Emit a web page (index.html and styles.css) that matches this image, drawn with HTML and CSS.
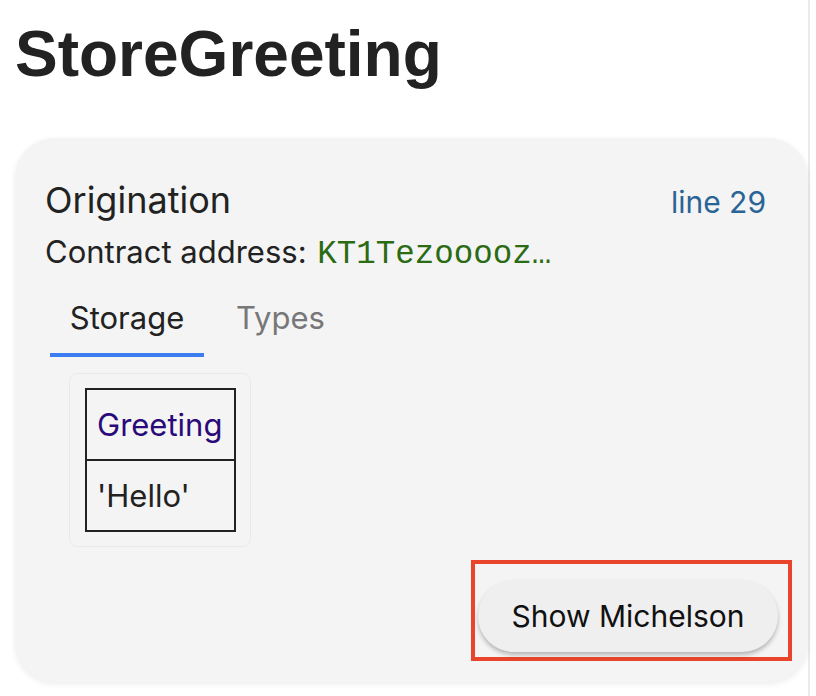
FILE: index.html
```html
<!DOCTYPE html>
<html>
<head>
<meta charset="utf-8">
<link rel="stylesheet" href="styles.css">
</head>
<body>
<div class="page">
  <h1 class="title">StoreGreeting</h1>
  <div class="card">
    <div class="card-head">
      <span class="heading">Origination</span>
      <a class="line-link">line 29</a>
    </div>
    <div class="address">Contract address: <span class="addr">KT1Tezooooz…</span></div>
    <div class="tabs">
      <div class="tab active">Storage</div>
      <div class="tab">Types</div>
    </div>
    <div class="storage">
      <table class="table">
        <tr><th>Greeting</th></tr>
        <tr><td>'Hello'</td></tr>
      </table>
    </div>
    <div class="actions">
      <div class="highlight">
        <button class="btn">Show Michelson</button>
      </div>
    </div>
  </div>
</div>
</body>
</html>
```

FILE: styles.css
```css
* { box-sizing: border-box; }
html, body { margin: 0; padding: 0; background: #fff; }
body { font-family: Inter, "Noto Sans", sans-serif; color: #222; }
.page {
  width: 810px;
  min-height: 696px;
  border-right: 2px solid #ebebeb;
  padding: 14px 0 0 15px;
}
.title {
  margin: 0;
  font-family: "Liberation Sans", Arial, sans-serif;
  font-weight: 700;
  font-size: 64px;
  line-height: 80px;
  color: #222;
}
.card {
  margin-top: 44px;
  width: 793px;
  height: 544px;
  background: #f4f4f4;
  border-radius: 40px;
  box-shadow: 0 2px 6px rgba(0,0,0,0.08);
  padding: 37px 42px 0 30px;
  display: flex;
  flex-direction: column;
}
.card-head {
  display: flex;
  justify-content: space-between;
  align-items: baseline;
}
.heading { font-size: 36px; line-height: 50px; color: #222; }
.line-link { font-size: 30px; color: #2a6496; }
.address { font-size: 31px; line-height: 44px; margin-top: 5px; }
.addr {
  font-family: "Liberation Mono", "DejaVu Sans Mono", monospace;
  font-size: 32.5px;
  color: #2b6b13;
  margin-left: 2px;
}
.tabs {
  display: flex;
  margin-top: 21px;
  margin-left: 5px;
}
.tab {
  font-size: 31px;
  line-height: 40px;
  padding: 0 0 15px 0;
  color: #777;
  border-bottom: 4px solid transparent;
}
.tab.active { color: #222; border-bottom-color: #3b7cf0; width: 154px; text-align: center; }
.tab:not(.active) { padding-left: 32px; }
.storage {
  margin-top: 16px;
  margin-left: 24px;
  align-self: flex-start;
  padding: 14px 14px 14px 15px;
  border: 1px solid #e9e9e9;
  border-radius: 8px;
}
.table {
  border-collapse: collapse;
  border: 2px solid #222;
}
.table th, .table td {
  border: 2px solid #222;
  text-align: left;
  font-weight: 400;
  font-size: 31px;
  line-height: 36px;
  padding: 17px 12px 16px 10px;
}
.table th { color: #2a0a7a; }
.actions {
  margin-top: auto;
  display: flex;
  justify-content: flex-end;
  padding-bottom: 21px;
  margin-right: -26px;
}
.highlight {
  border: 4px solid #e8452c;
  padding: 16px 10px 5px 3px;
}
.btn {
  font-family: Inter, "Noto Sans", sans-serif;
  font-size: 30px;
  color: #111;
  background: #efefef;
  border: none;
  border-radius: 36px;
  width: 300px;
  height: 72px;
  box-shadow: 0 3px 4px rgba(0,0,0,0.25);
}
```
